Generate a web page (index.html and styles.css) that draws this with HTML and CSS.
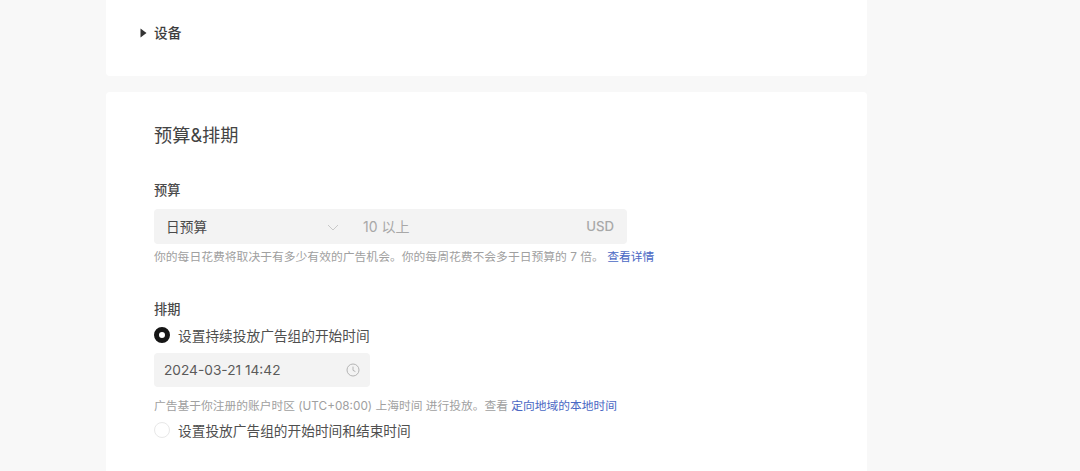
FILE: index.html
```html
<!DOCTYPE html>
<html lang="zh-CN">
<head>
<meta charset="utf-8">
<title>预算&amp;排期</title>
<link rel="stylesheet" href="styles.css">
</head>
<body>
<main class="column">
  <section class="card card-device">
    <div class="disclosure">
      <svg class="caret" width="7" height="10" viewBox="0 0 7 10"><path d="M0.5 0.5 L6.5 5 L0.5 9.5 Z"/></svg>
      <span>设备</span>
    </div>
  </section>
  <section class="card card-budget">
    <h2 class="title">预算&amp;排期</h2>

    <div class="label label-budget">预算</div>
    <div class="budget-row">
      <div class="budget-select">
        <span>日预算</span>
        <svg class="chevron" width="12" height="7" viewBox="0 0 12 7"><path d="M1 1 L6 6 L11 1"/></svg>
      </div>
      <div class="budget-input">
        <span>10 以上</span>
        <span class="currency">USD</span>
      </div>
    </div>
    <p class="hint hint-budget">你的每日花费将取决于有多少有效的广告机会。你的每周花费不会多于日预算的 7 倍。 <a class="link">查看详情</a></p>

    <div class="label label-schedule">排期</div>
    <div class="radio-row">
      <span class="radio radio-on"></span>
      <span>设置持续投放广告组的开始时间</span>
    </div>
    <div class="date-box">
      <span>2024-03-21 14:42</span>
      <svg class="clock" width="14" height="14" viewBox="0 0 14 14"><circle cx="7" cy="7" r="6"/><path d="M7 3.6 V7.3 L9.4 8.6"/></svg>
    </div>
    <p class="hint hint-schedule">广告基于你注册的账户时区 (UTC+08:00) 上海时间 进行投放。查看 <a class="link">定向地域的本地时间</a></p>
    <div class="radio-row radio-row-2">
      <span class="radio"></span>
      <span>设置投放广告组的开始时间和结束时间</span>
    </div>
  </section>
</main>
</body>
</html>
```
FILE: styles.css
```css
html, body {
  margin: 0;
  height: 471px;
  overflow: hidden;
  background: #f8f8f8;
}
body {
  font-family: Inter, "Noto Sans CJK SC", sans-serif;
  color: #3a3a3a;
  font-size: 13.7px;
}
.column {
  width: 761px;
  margin-left: 106px;
  display: flex;
  flex-direction: column;
  gap: 16px;
}
.card {
  background: #fff;
  border-radius: 4px;
}
.card-device {
  height: 76px;
  padding-left: 34px;
  box-sizing: border-box;
  border-radius: 0 0 4px 4px;
}
.disclosure {
  display: flex;
  align-items: center;
  gap: 7px;
  height: 20px;
  padding-top: 23px;
  font-weight: 500;
  color: #3d3d3d;
}
.disclosure span { position: relative; top: -1px; }
.caret path { fill: #333; }
.card-budget {
  height: 400px;
  padding: 30px 48px 0;
  box-sizing: border-box;
}
.title {
  margin: 0;
  font-size: 18.2px;
  line-height: 26px;
  font-weight: 400;
  color: #444;
}
.label {
  font-weight: 500;
  font-size: 13.2px;
  line-height: 18px;
  color: #4a4a4a;
}
.label-budget { margin-top: 33px; }
.label-schedule { margin-top: 34px; }
.budget-row {
  margin-top: 10px;
  width: 473px;
  height: 35px;
  display: flex;
  background: #f3f3f3;
  border-radius: 4px;
  color: #a8a8a8;
}
.budget-select {
  width: 185px;
  padding: 0 0 2px 12px;
  box-sizing: border-box;
  display: flex;
  align-items: center;
  justify-content: space-between;
  color: #4a4a4a;
}
.chevron {
  position: relative;
  top: 2px;
}
.chevron path {
  fill: none;
  stroke: #c8c8c8;
  stroke-width: 1;
}
.budget-input {
  flex: 1;
  padding: 0 13px 1px 24px;
  display: flex;
  align-items: center;
  justify-content: space-between;
  font-size: 14px;
}
.currency { font-size: 13.2px; font-weight: 500; }
.hint {
  margin: 0;
  font-size: 11.8px;
  line-height: 18px;
  color: #a0a0a0;
}
.hint-budget { margin-top: 4px; }
.hint-schedule { margin-top: 10px; font-size: 11.75px; }
.link { color: #4a68c4; }
.radio-row {
  margin-top: 7px;
  height: 20px;
  display: flex;
  align-items: center;
  gap: 8px;
  color: #4f4f4f;
}
.radio-row-2 { margin-top: 5px; }
.radio {
  width: 16px;
  height: 16px;
  box-sizing: border-box;
  border-radius: 50%;
  border: 1px solid #e8e8e8;
  background: #fff;
}
.radio-on { border: 5px solid #151515; }
.date-box {
  margin-top: 8px;
  width: 216px;
  height: 34px;
  padding: 0 10px;
  box-sizing: border-box;
  display: flex;
  align-items: center;
  justify-content: space-between;
  background: #f3f3f3;
  border-radius: 4px;
  color: #5a5a5a;
}
.clock circle, .clock path {
  fill: none;
  stroke: #b4b4b4;
  stroke-width: 1;
}
```
